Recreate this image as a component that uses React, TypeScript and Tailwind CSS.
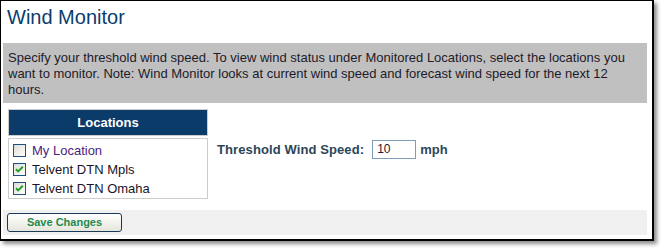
import React from "react";

function Check({ checked }: { checked: boolean }) {
  return (
    <span className="w-[13px] h-[13px] border border-[#1c5180] bg-gradient-to-br from-[#dcdcd7] to-white flex items-center justify-center shrink-0">
      {checked && (
        <svg width="9" height="9" viewBox="0 0 9 9">
          <path d="M1 4.2 L3.2 6.4 L7.8 1.8" fill="none" stroke="#21a121" strokeWidth="2" />
        </svg>
      )}
    </span>
  );
}

export default function App() {
  const rows = [
    { label: "My Location", checked: false, color: "text-[#4b1d80]" },
    { label: "Telvent DTN Mpls", checked: true, color: "text-[#1a1428]" },
    { label: "Telvent DTN Omaha", checked: true, color: "text-[#1a1428]" },
  ];
  return (
    <div className="w-[661px] h-[248px] bg-white" style={{ fontFamily: '"Liberation Sans", Arial, sans-serif' }}>
      <div className="w-[654px] h-[241px] border-l border-t border-r-2 border-b-2 border-black bg-white shadow-[3px_3px_4px_rgba(0,0,0,0.45)] flex flex-col pl-[2px] pr-[5px]">
        <div className="pt-[4px] pl-[4px] h-[42px] text-[20px] leading-[24px] text-[#0b3c6d]">Wind Monitor</div>
        <div className="bg-[#c0c0c0] pl-[5px] pt-[7px] pb-[5px] text-[13px] leading-[16px] text-[#221a2a]">
          Specify your threshold wind speed. To view wind status under Monitored Locations, select the locations you
          <br />
          want to monitor. Note: Wind Monitor looks at current wind speed and forecast wind speed for the next 12
          <br />
          hours.
        </div>
        <div className="flex pl-[5px] pt-[6px]">
          <div className="w-[200px] flex flex-col">
            <div className="h-[27px] border border-[#cccccc] bg-[#0b3b69] text-white font-bold text-[13px] flex items-center justify-center">
              Locations
            </div>
            <div className="mt-[2px] h-[61px] border border-[#cccccc] pt-[2px] pl-[4px]">
              {rows.map((r) => (
                <div key={r.label} className="h-[19px] flex items-center">
                  <Check checked={r.checked} />
                  <span className={`ml-[6px] text-[13px] leading-[19px] ${r.color}`}>{r.label}</span>
                </div>
              ))}
            </div>
          </div>
          <div className="ml-[9px] mt-[31px] flex items-start h-[19px]">
            <span className="font-bold text-[13px] leading-[19px] text-[#2c4658] tracking-[0.1px]">Threshold Wind Speed:</span>
            <span className="ml-[8px] w-[44px] h-[19px] border border-[#7f9db9] text-[12px] leading-[17px] pl-[4px] text-[#241a2e]">10</span>
            <span className="ml-[4px] font-bold text-[13px] leading-[19px] text-[#2c4658]">mph</span>
          </div>
        </div>
        <div className="mt-[11px] h-[25px] bg-[#f0f0f0] pl-[4px] pt-[3px]">
          <button className="w-[115px] h-[19px] rounded-[3px] border border-[#1a3a5c] bg-gradient-to-b from-white to-[#e6e6dc] text-[11px] font-bold text-[#1f8a4e] flex items-center justify-center">
            Save Changes
          </button>
        </div>
      </div>
    </div>
  );
}
